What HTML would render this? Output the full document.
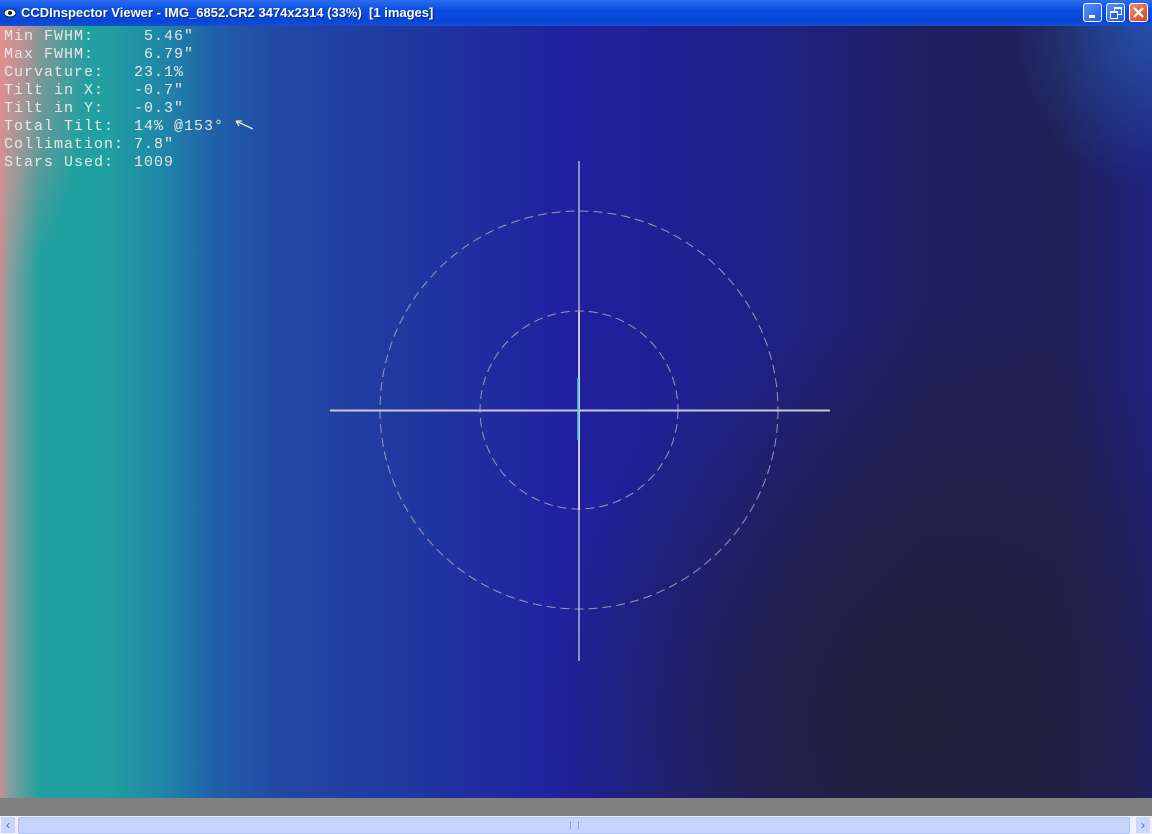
<!DOCTYPE html>
<html><head><style>
body{margin:0;width:1152px;height:834px;overflow:hidden;position:relative;background:#808080;font-family:"Liberation Sans",sans-serif}
#title{position:absolute;left:0;top:0;width:1152px;height:26px;background:linear-gradient(#2a6cf0,#0a4ee0 40%,#0846d8 80%,#1450d0);color:#fff;font:bold 13px "Liberation Sans",sans-serif;}
#title span{position:absolute;left:21px;top:5px;text-shadow:1px 1px #0a2a80}
.btn{position:absolute;top:3px;width:19px;height:19px;border:1px solid #fff;border-radius:3px;background:linear-gradient(135deg,#5a90ff,#1e5ce8);box-sizing:border-box}
#img{position:absolute;left:0;top:26px;width:1152px;height:772px;
background:
radial-gradient(ellipse 90px 260px at 0px 0px,rgba(240,140,140,0.85),rgba(240,140,140,0)),
radial-gradient(ellipse 380px 420px at 920px 700px,rgba(32,32,56,1),rgba(32,32,60,0.7) 45%,rgba(32,32,80,0) 100%),
radial-gradient(ellipse 140px 160px at 1152px 0px,rgba(40,100,180,0.7),rgba(40,60,160,0)),
linear-gradient(90deg,#c89090 0px,#80a0a0 10px,#20a0a0 40px,#20a0a0 105px,#2088a8 160px,#2060a8 215px,#2248a4 280px,#2036a0 420px,#2020a0 570px,#20208a 750px,#202060 930px,#202058 1060px,#202080 1152px);}
#txt{position:absolute;left:4px;top:28px;color:#e8e8e8;font:15px/18px "Liberation Mono",monospace;letter-spacing:1px;white-space:pre}
#sb{position:absolute;left:0;top:816px;width:1152px;height:18px;background:#f0f0ff}
</style></head><body>
<div id="title"><svg style="position:absolute;left:3px;top:6px" width="15" height="13"><ellipse cx="7" cy="7" rx="6" ry="4" fill="#fff" stroke="#222"/><circle cx="7" cy="7" r="2" fill="#222"/></svg><span>CCDInspector Viewer - IMG_6852.CR2 3474x2314 (33%)&nbsp; [1 images]</span>
<div class="btn" style="left:1083px"><div style="position:absolute;left:5px;top:11px;width:6px;height:3px;background:#fff"></div></div>
<div class="btn" style="left:1106px"><div style="position:absolute;left:7px;top:3px;width:6px;height:5px;border:1px solid #fff;border-top-width:2px"></div><div style="position:absolute;left:3px;top:7px;width:6px;height:5px;border:1px solid #fff;border-top-width:2px;background:#2a64ee"></div></div>
<div class="btn" style="left:1129px;background:linear-gradient(135deg,#f09070,#d8401c)"><svg width="17" height="17"><path d="M4 4L13 13M13 4L4 13" stroke="#fff" stroke-width="2.2"/></svg></div>
</div>
<div id="img"></div>
<div id="txt">Min FWHM:     5.46"
Max FWHM:     6.79"
Curvature:   23.1%
Tilt in X:   -0.7"
Tilt in Y:   -0.3"
Total Tilt:  14% @153°
Collimation: 7.8"
Stars Used:  1009</div>
<svg style="position:absolute;left:0;top:0" width="1152" height="800">
<path d="M253 129L236 121M236 121l6 0M236 121l3 5" stroke="#e8e8e8" stroke-width="1.3" fill="none"/>
<circle cx="579" cy="410" r="199" fill="none" stroke="#9898b8" stroke-width="1" stroke-dasharray="9 5"/>
<circle cx="579" cy="410" r="99" fill="none" stroke="#9898b8" stroke-width="1" stroke-dasharray="9 5"/>
<line x1="330" y1="410.5" x2="830" y2="410.5" stroke="#c8c8d0" stroke-width="2"/>
<line x1="579" y1="161" x2="579" y2="661" stroke="#c8c8d0" stroke-width="1.3"/>
<line x1="579" y1="312" x2="579" y2="510" stroke="#c8c8d0" stroke-width="2"/>
<line x1="578" y1="378" x2="578" y2="440" stroke="#40c8e8" stroke-width="1.5"/>
</svg>
<div id="sb">
<div style="position:absolute;left:1px;top:1px;width:14px;height:16px;background:#c8d8f8;color:#4060a0;font-size:12px;text-align:center;line-height:16px">‹</div>
<div style="position:absolute;left:18px;top:1px;width:1110px;height:15px;border:1px solid #b0c4f0;border-radius:2px;background:#c4d4fc"></div>
<div style="position:absolute;left:570px;top:5px;width:7px;height:8px;border-left:1px solid #90a0d0;border-right:1px solid #90a0d0"></div>
<div style="position:absolute;left:1136px;top:1px;width:14px;height:16px;background:#c8d8f8;color:#4060a0;font-size:12px;text-align:center;line-height:16px">›</div>
</div>
</body></html>
